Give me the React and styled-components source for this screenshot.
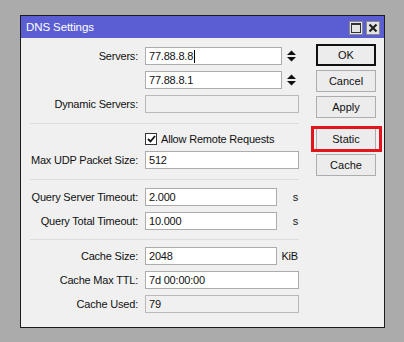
import React from "react";
import styled, { createGlobalStyle } from "styled-components";

const Global = createGlobalStyle`
  html, body { margin: 0; padding: 0; background: #ababab; }
  body { font-family: "Liberation Sans", Arial, sans-serif; }
`;

const Page = styled.div`
  width: 404px;
  height: 342px;
  box-sizing: border-box;
  padding: 15px 0 0 20px;
  background: #ababab;
`;

const Window = styled.div`
  width: 365px;
  height: 313px;
  box-sizing: border-box;
  border: 1px solid #1c1c1c;
  background: #f0f0f0;
  display: flex;
  flex-direction: column;
`;

const TitleBar = styled.div`
  height: 22px;
  flex: none;
  background: #5b5ed2;
  display: flex;
  align-items: center;
  justify-content: space-between;
  padding: 0 4px 0 5px;
  color: #fff;
  font-size: 11.5px;
  letter-spacing: -0.1px;
`;

const TitleButtons = styled.div`
  display: flex;
  gap: 3px;
  padding-top: 1px;
`;

const TitleBox = styled.div`
  width: 14px;
  height: 14px;
  box-sizing: border-box;
  background: #e4e4e4;
  border: 1px solid #8a8a8a;
  display: flex;
  align-items: center;
  justify-content: center;
`;

const Body = styled.div`
  flex: 1;
  display: flex;
  gap: 17px;
`;

const Form = styled.div`
  width: 278px;
  display: flex;
  flex-direction: column;
  padding-top: 9px;
  font-size: 11px;
  letter-spacing: -0.2px;
  color: #111;
`;

const Row = styled.div`
  display: grid;
  grid-template-columns: 117px 1fr;
  column-gap: 7px;
  align-items: center;
  height: ${(p) => p.$h || 18}px;
  margin-top: ${(p) => p.$mt || 0}px;
`;

const Label = styled.div`
  text-align: right;
  white-space: nowrap;
`;

const FieldWrap = styled.div`
  display: flex;
  align-items: center;
  height: 100%;
`;

const Field = styled.div`
  box-sizing: border-box;
  width: ${(p) => p.$w}px;
  height: 18px;
  border: 1px solid ${(p) => (p.$disabled ? "#b9b9b9" : "#acacac")};
  background: ${(p) => (p.$disabled ? "#f0f0f0" : "#fff")};
  padding: 0 3px;
  display: flex;
  align-items: center;
  white-space: nowrap;
`;

const Caret = styled.span`
  display: inline-block;
  width: 1px;
  height: 13px;
  background: #000;
  margin-left: 1px;
`;

const Unit = styled.div`
  width: 22px;
  text-align: right;
  padding-right: 1px;
  box-sizing: border-box;
`;

const Spinner = styled.div`
  margin-left: 5px;
  display: flex;
  align-items: center;
`;

const Divider = styled.div`
  height: 1px;
  background: #dcdcdc;
  margin: ${(p) => p.$m};
  margin-left: 9px;
`;

const CheckLine = styled.div`
  display: flex;
  align-items: center;
  gap: 4px;
`;

const Box = styled.div`
  width: 12px;
  height: 12px;
  box-sizing: border-box;
  border: 1px solid #333;
  background: #fff;
  display: flex;
  align-items: center;
  justify-content: center;
`;

const Buttons = styled.div`
  display: flex;
  flex-direction: column;
  padding-top: 6px;
  width: 60px;
`;

const Button = styled.div`
  position: relative;
  box-sizing: border-box;
  height: 22px;
  margin-top: ${(p) => p.$mt || 0}px;
  border: 1px solid ${(p) => (p.$default ? "#111" : "#adadad")};
  box-shadow: ${(p) => (p.$default ? "inset 0 0 0 1px #111" : "none")};
  background: #ececec;
  display: flex;
  align-items: center;
  justify-content: center;
  font-size: 11px;
  color: #111;
`;

const Highlight = styled.div`
  position: absolute;
  top: -3px;
  bottom: -3px;
  left: -6px;
  right: -7px;
  border: 3px solid #e2141c;
  pointer-events: none;
`;

function SpinArrows() {
  return (
    <svg width="9" height="12" viewBox="0 0 9 12">
      <polygon points="0,5 4.5,0.5 9,5" fill="#111" />
      <polygon points="0,7 4.5,11.5 9,7" fill="#111" />
    </svg>
  );
}

export default function App() {
  return (
    <Page>
      <Global />
      <Window>
        <TitleBar>
          <span>DNS Settings</span>
          <TitleButtons>
            <TitleBox>
              <svg width="10" height="10" viewBox="0 0 10 10">
                <rect x="0.5" y="0.5" width="9" height="9" fill="none" stroke="#333" />
                <rect x="0.5" y="0.5" width="9" height="1.5" fill="#333" />
              </svg>
            </TitleBox>
            <TitleBox>
              <svg width="10" height="10" viewBox="0 0 10 10">
                <path d="M1.5 1.5 L8.5 8.5 M8.5 1.5 L1.5 8.5" stroke="#222" strokeWidth="2.2" />
              </svg>
            </TitleBox>
          </TitleButtons>
        </TitleBar>
        <Body>
          <Form>
            <Row>
              <Label>Servers:</Label>
              <FieldWrap>
                <Field $w={137}>
                  77.88.8.8<Caret />
                </Field>
                <Spinner>
                  <SpinArrows />
                </Spinner>
              </FieldWrap>
            </Row>
            <Row $mt={6}>
              <Label />
              <FieldWrap>
                <Field $w={137}>77.88.8.1</Field>
                <Spinner>
                  <SpinArrows />
                </Spinner>
              </FieldWrap>
            </Row>
            <Row $mt={6}>
              <Label>Dynamic Servers:</Label>
              <FieldWrap>
                <Field $w={154} $disabled />
              </FieldWrap>
            </Row>
            <Divider $m="10px 0 7px" />
            <Row $h={16}>
              <Label />
              <CheckLine>
                <Box>
                  <svg width="9" height="8" viewBox="0 0 9 8">
                    <path d="M1 4 L3.5 6.5 L8 1" fill="none" stroke="#111" strokeWidth="1.8" />
                  </svg>
                </Box>
                <span>Allow Remote Requests</span>
              </CheckLine>
            </Row>
            <Row $mt={4}>
              <Label>Max UDP Packet Size:</Label>
              <FieldWrap>
                <Field $w={154}>512</Field>
              </FieldWrap>
            </Row>
            <Divider $m="10px 0 8px" />
            <Row>
              <Label>Query Server Timeout:</Label>
              <FieldWrap>
                <Field $w={132}>2.000</Field>
                <Unit>s</Unit>
              </FieldWrap>
            </Row>
            <Row $mt={6}>
              <Label>Query Total Timeout:</Label>
              <FieldWrap>
                <Field $w={132}>10.000</Field>
                <Unit>s</Unit>
              </FieldWrap>
            </Row>
            <Divider $m="9px 0 7px" />
            <Row>
              <Label>Cache Size:</Label>
              <FieldWrap>
                <Field $w={132}>2048</Field>
                <Unit>KiB</Unit>
              </FieldWrap>
            </Row>
            <Row $mt={6}>
              <Label>Cache Max TTL:</Label>
              <FieldWrap>
                <Field $w={154}>7d 00:00:00</Field>
              </FieldWrap>
            </Row>
            <Row $mt={6}>
              <Label>Cache Used:</Label>
              <FieldWrap>
                <Field $w={154} $disabled>
                  79
                </Field>
              </FieldWrap>
            </Row>
          </Form>
          <Buttons>
            <Button $default>OK</Button>
            <Button $mt={4}>Cancel</Button>
            <Button $mt={4}>Apply</Button>
            <Button $mt={10}>
              Static
              <Highlight />
            </Button>
            <Button $mt={4}>Cache</Button>
          </Buttons>
        </Body>
      </Window>
    </Page>
  );
}
